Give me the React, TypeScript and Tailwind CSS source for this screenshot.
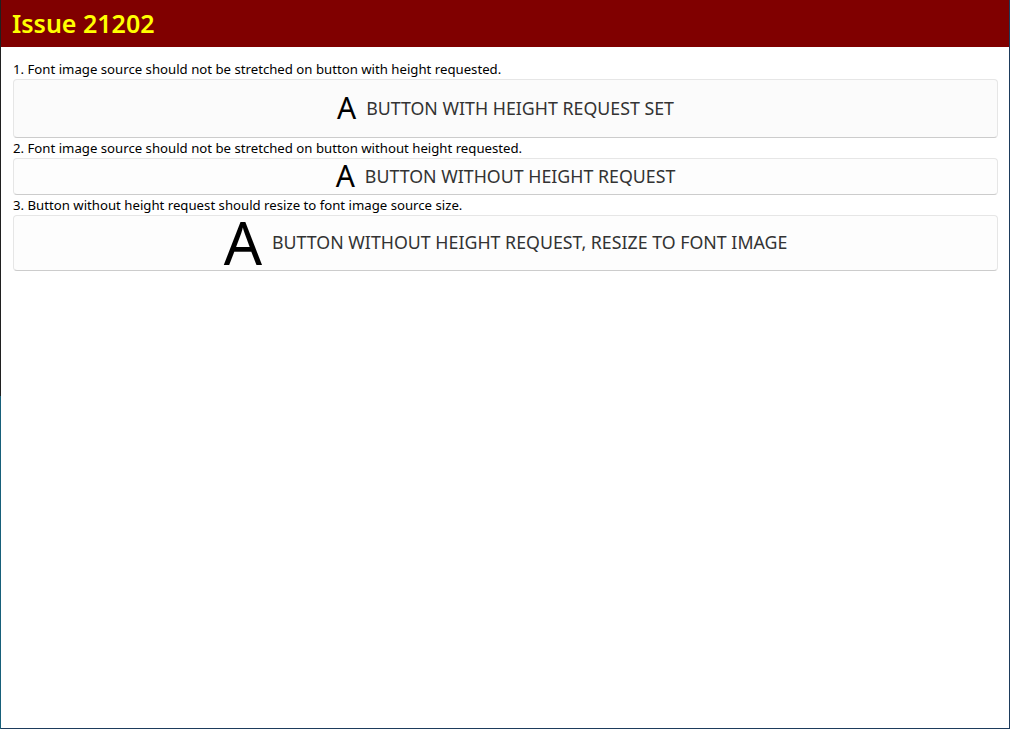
export default function App() {
  const rows = [
    {
      label: "1. Font image source should not be stretched on button with height requested.",
      text: "BUTTON WITH HEIGHT REQUEST SET",
      h: "h-[59px] bg-[#fbfbfb]",
      glyph: "text-[30px] leading-[30px] mb-[2px]",
    },
    {
      label: "2. Font image source should not be stretched on button without height requested.",
      text: "BUTTON WITHOUT HEIGHT REQUEST",
      h: "h-[37px] bg-[#fdfdfd]",
      glyph: "text-[30px] leading-[30px] mb-[2px]",
    },
    {
      label: "3. Button without height request should resize to font image source size.",
      text: "BUTTON WITHOUT HEIGHT REQUEST, RESIZE TO FONT IMAGE",
      h: "h-[56px] bg-[#fdfdfd]",
      glyph: "text-[60px] leading-[46px] mb-[3px]",
    },
  ];

  return (
    <div className="flex h-[729px] w-[1010px] bg-white font-['Noto_Sans','Open_Sans',sans-serif]">
      {/* window frame, left edge */}
      <div className="flex w-px flex-col">
        <div className="h-[396px] bg-[#202020]" />
        <div className="flex-1 bg-[#17607a]" />
      </div>

      <div className="flex flex-1 flex-col border-r border-b border-[#1d3b5c]">
        <div className="flex h-[47px] items-center bg-[#800000] pl-[11px]">
          <h1 className="text-[25px] font-semibold leading-none text-[#ffff00]">Issue 21202</h1>
        </div>

        <div className="flex flex-col px-[12px] pt-[12px] pr-[11px]">
          {rows.map((r, i) => (
            <div key={i} className="flex flex-col">
              <p className="text-[13.2px] leading-[20px] text-black">{r.label}</p>
              <button
                className={`${r.h} flex items-center justify-center gap-[10px] rounded-[4px] border border-[#e6e6e6] border-b-[#cccccc]`}
              >
                <span className={`${r.glyph} font-normal text-black`}>A</span>
                <span className="text-[17.8px] leading-none text-[#333333]">{r.text}</span>
              </button>
            </div>
          ))}
        </div>
      </div>
    </div>
  );
}
